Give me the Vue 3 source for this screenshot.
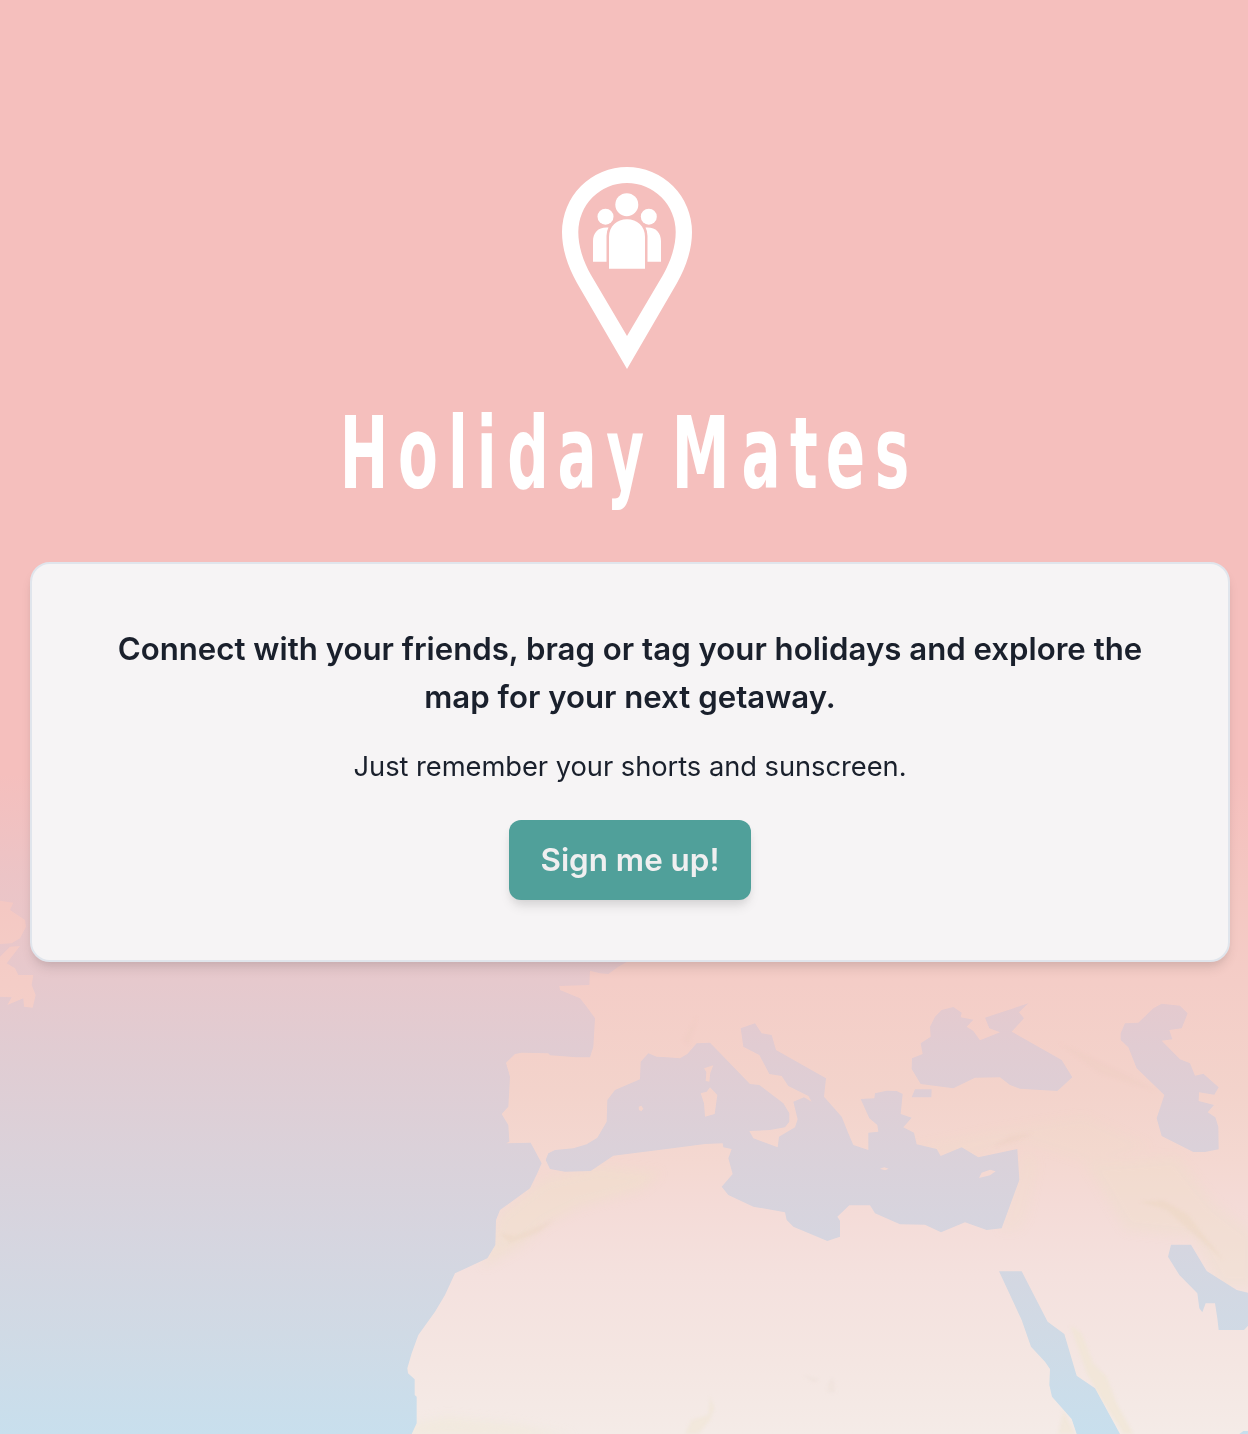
<script setup>
const title = 'Holiday Mates'
const titleScale = 0.58
const titleX = [339.7, 398, 448.1, 476.8, 507.4, 557.6, 606.3, 650, 671.7, 741.6, 790, 825.8, 874.7]
const glyphX = titleX.map((x) => (x / titleScale).toFixed(1)).join(' ')
</script>

<template>
  <main class="landing">
    <svg class="map" viewBox="0 0 3744 4302" aria-hidden="true">
      <defs>
        <linearGradient id="sea" gradientUnits="userSpaceOnUse" x1="0" y1="0" x2="0" y2="4302">
          <stop offset="0.54" stop-color="#f5bfbd" />
          <stop offset="0.61" stop-color="#ecc4c6" />
          <stop offset="0.685" stop-color="#e6c9cd" />
          <stop offset="0.73" stop-color="#e1ccd2" />
          <stop offset="0.8" stop-color="#dbd1d9" />
          <stop offset="0.86" stop-color="#d6d5df" />
          <stop offset="0.93" stop-color="#d0dae5" />
          <stop offset="1" stop-color="#c8dfed" />
        </linearGradient>
        <linearGradient id="land" gradientUnits="userSpaceOnUse" x1="0" y1="0" x2="0" y2="4302">
          <stop offset="0.54" stop-color="#f5bfbd" />
          <stop offset="0.62" stop-color="#f4c7c2" />
          <stop offset="0.685" stop-color="#f4cdc7" />
          <stop offset="0.76" stop-color="#f3d3cb" />
          <stop offset="0.81" stop-color="#f4d8d1" />
          <stop offset="0.84" stop-color="#f4dbd7" />
          <stop offset="0.89" stop-color="#f4e1de" />
          <stop offset="0.95" stop-color="#f4e6e2" />
          <stop offset="1" stop-color="#f4ebe7" />
        </linearGradient>
        <filter id="soft" x="-20%" y="-20%" width="140%" height="140%">
          <feGaussianBlur stdDeviation="14" />
        </filter>
        <filter id="fine" x="-20%" y="-20%" width="140%" height="140%">
          <feGaussianBlur stdDeviation="5" />
        </filter>
        <mask id="coast" maskUnits="userSpaceOnUse" x="0" y="0" width="3744" height="4302">
          <g transform="translate(0 2580)" fill="#fff">
            <path d="M0 122 40 128 30 150 75 180 78 200 60 235 35 250 0 252Z" />
            <path d="M0 290 30 260 60 258 20 310 45 325 55 345 100 345 95 375 107 405 98 443 72 440 70 415 22 435 35 412 0 410Z" />
          </g>
          <g transform="translate(1200 2850)">
            <path fill="#fff" d="M680 36 655 50 625 72 600 70 570 62 568 105 478 108 480 120 540 145 560 170 585 205 580 290 570 322 530 322 450 316 445 310 365 308 345 312 318 338 330 380 325 470 305 492 325 525 328 575 318 580 392 578 425 640 412 670 390 715 300 780 288 810 286 885 262 925 165 970 135 1035 105 1085 55 1155 35 1210 22 1255 24 1270 44 1288 44 1335 50 1340 50 1420 35 1452H2544V-900H700Z" />
            <path fill="#000" d="M437 630 445 610 465 600 520 595 560 583 592 563 620 515 622 450 645 420 720 388 722 335 745 310 770 320 800 322 840 325 862 312 890 280 930 278 1050 402 1078 405 1150 460 1168 490 1168 515 1155 532 1110 540 1048 543 1060 565 1133 592 1137 560 1185 532 1193 508 1180 455 1212 442 1235 455 1225 438 1165 408 1145 378 1108 372 1078 315 1030 290 1022 235 1065 220 1085 250 1115 255 1128 300 1278 385 1272 440 1325 500 1345 550 1360 585 1405 600 1405 548 1435 545 1432 525 1408 505 1382 447 1423 445 1425 430 1460 422 1490 423 1508 432 1502 492 1535 503 1510 532 1542 548 1550 583 1610 597 1622 618 1685 592 1735 622 1852 597 1858 690 1805 835 1760 840 1695 817 1623 847 1575 824 1500 823 1425 790 1410 766 1348 766 1312 800 1320 812 1320 860 1282 873 1180 830 1160 810 1155 787 1060 770 985 735 965 710 998 672 985 625 995 597 970 592 968 580 915 582 800 597 640 617 572 663 495 665 450 657Z" />
            <g fill="#fff">
              <path d="M912 355 940 346 931 368 928 395 917 393 919 366Z" />
              <path d="M902 430 920 425 930 412 952 435 944 492 915 500 912 460Z" />
              <path d="M716 470 724 467 730 476 724 484 717 480Z" />
            </g>
          </g>
          <g transform="translate(2460 2850)">
            <g fill="#fff">
              <path d="M180 656 193 652 206 656 195 661Z" />
              <path d="M477 684 485 668 510 659 527 664 510 676Z" />
            </g>
            <g fill="#000">
              <path d="M330 230 345 200 365 180 400 171 425 188 422 202 460 209 440 230 460 243 480 271 540 247 508 235 495 203 625 160 597 187 612 205 575 245 725 330 757 382 712 423 600 416 570 405 540 382 465 383 400 415 302 402 275 357 276 325 308 312 302 280 332 260Z" />
              <path d="M285 418 335 418 334 442 275 442Z" />
              <path d="M902 250 915 220 955 218 1000 175 1025 161 1080 167 1103 190 1085 235 1048 240 1057 268 1025 272 1080 328 1110 340 1125 377 1150 371 1196 412 1183 434 1137 427 1136 453 1182 465 1163 487 1186 502 1195 530 1196 598 1155 606 1120 606 1025 558 1010 505 1033 435 950 355 925 292 902 270Z" />
              <path d="M537 964H605L683 1115 733 1152 770 1277 825 1315 900 1452H770L755 1407 696 1340 688 1305 690 1257 675 1235 633 1190 605 1110Z" />
              <path d="M1053 884H1113L1160 963 1250 1020 1284 1028V1127L1272 1140H1196L1192 1105 1185 1060H1157L1147 1087 1138 1075 1132 1030 1078 975 1044 920Z" />
              <path d="M1258 1452 1270 1443H1284V1452Z" />
            </g>
          </g>
        </mask>
      </defs>
      <rect width="3744" height="4302" fill="url(#sea)" />
      <g mask="url(#coast)">
        <rect width="3744" height="4302" fill="url(#land)" />
        <g transform="translate(1200 2850)" fill="#efdfc9">
          <g filter="url(#soft)">
            <path opacity=".42" d="M300 790 430 690 600 650 780 670 720 720 540 770 440 820 360 890 250 950Z" />
            <path opacity=".35" d="M2060 640 2330 620 2440 760 2560 850 2560 1010 2460 1010 2380 860 2180 840Z" />
            <path opacity=".2" d="M1880 600 1910 640 1880 800 1850 840 1800 840Z" />
            <path opacity=".18" d="M1500 600 1800 540 2050 500 2250 590 2080 640 1870 570 1700 620Z" />
            <path opacity=".5" fill="#f0ead8" d="M30 1425 140 1400 360 1425 520 1460H30Z" />
          </g>
          <g filter="url(#fine)" fill="#f0e6d2">
            <path opacity=".6" d="M2010 1125 2045 1150 2080 1240 2120 1280 2150 1360 2200 1452H2170L2100 1340 2060 1270Z" />
            <path opacity=".5" d="M1990 1380 2025 1452H1975Z" />
            <path opacity=".5" d="M930 1340 943 1375 930 1410 895 1452H855L875 1410 925 1395Z" />
            <path opacity=".35" fill="#ead5c0" d="M300 850 345 858 460 810 420 845 330 880Z" />
            <path opacity=".35" fill="#ead5be" d="M2220 755 2290 750 2365 795 2470 930 2390 860 2300 780Z" />
            <path opacity=".25" fill="#eacdbc" d="M1780 590 1830 560 1900 550 1840 575Z" />
            <path opacity=".2" fill="#eacdbc" d="M1980 280 2070 320 2200 385 2270 425 2100 370Z" />
            <path opacity=".2" fill="#eacdbc" d="M850 270 890 200 880 240 865 285Z" />
            <path opacity=".4" fill="#eaded8" d="M1210 1275 1258 1288 1240 1297ZM1284 1300 1300 1280 1305 1328 1282 1326Z" />
          </g>
        </g>
      </g>
    </svg>

    <header class="brand">
      <svg class="pin" viewBox="561 166 132 204" fill="#fff" aria-hidden="true">
        <path fill-rule="evenodd" d="M627 369 577 283C567 265 562 248 562 232A65 65 0 0 1 692 232C692 248 687 265 677 283ZM627 336 591 275C583 261 578.3 246 578.3 232A48.7 49 0 0 1 675.7 232C675.7 246 671 261 663 275Z" />
        <circle cx="626.8" cy="204.7" r="11.5" />
        <circle cx="605.5" cy="216.7" r="8" />
        <circle cx="648.8" cy="216.7" r="8" />
        <path d="M609 268.7V237C609 226 617 219.3 627 219.3S645 226 645 237V268.7Z" />
        <path d="M593 261.7V241C593 232 599 226.5 608.5 227.5Q606.5 231 606.5 236V261.7Z" />
        <path d="M661 261.7V241C661 232 655 226.5 645.5 227.5Q647.5 231 647.5 236V261.7Z" />
      </svg>
      <svg class="wordmark" viewBox="330 375 596 165" role="heading" aria-level="1">
        <text :x="glyphX" y="488.5" :transform="`scale(${titleScale} 1)`">{{ title }}</text>
      </svg>
    </header>

    <section class="card">
      <h2>Connect with your friends, brag or tag your holidays and explore the<br />map for your next getaway.</h2>
      <p>Just remember your shorts and sunscreen.</p>
      <button type="button">Sign me up!</button>
    </section>
  </main>
</template>

<style>
body {
  margin: 0;
}
</style>

<style scoped>
.landing {
  position: relative;
  width: 1248px;
  height: 1434px;
  overflow: hidden;
  box-sizing: border-box;
  padding: 166px 18px 0 30px;
  font-family: Inter, "Liberation Sans", sans-serif;
  color: #1a202c;
}
.map {
  position: absolute;
  inset: 0;
  width: 100%;
  height: 100%;
}
.brand {
  position: relative;
  display: flex;
  flex-direction: column;
  align-items: center;
  gap: 5px;
  margin-right: 6px;
}
.pin {
  width: 132px;
  height: 204px;
}
.wordmark {
  width: 596px;
  height: 165px;
  margin-left: 2px;
  overflow: visible;
}
.wordmark text {
  font-family: "DejaVu Sans", sans-serif;
  font-size: 100px;
  font-weight: 700;
  fill: #fff;
}
.card {
  position: relative;
  display: flex;
  flex-direction: column;
  align-items: center;
  box-sizing: border-box;
  height: 400px;
  margin-top: 22px;
  padding-top: 61px;
  background: #f6f4f5;
  border: 2px solid #e0e5ec;
  border-radius: 20px;
  box-shadow: 0 8px 12px -2px rgba(0, 0, 0, 0.1), 0 4px 8px -2px rgba(0, 0, 0, 0.06);
  text-align: center;
}
h2 {
  margin: 0;
  font-size: 31.2px;
  line-height: 48px;
  font-weight: 600;
  white-space: nowrap;
}
p {
  margin: 25px 0 0;
  font-size: 27.3px;
  line-height: 42px;
  letter-spacing: -0.04px;
  white-space: nowrap;
}
button {
  margin-top: 32px;
  width: 242px;
  height: 80px;
  padding: 0;
  border: 0;
  border-radius: 12px;
  background: #50a09a;
  color: #f0eff0;
  font: 600 31.4px/80px Inter, sans-serif;
  box-shadow: 0 8px 12px -2px rgba(0, 0, 0, 0.1), 0 4px 8px -2px rgba(0, 0, 0, 0.06);
}
</style>
